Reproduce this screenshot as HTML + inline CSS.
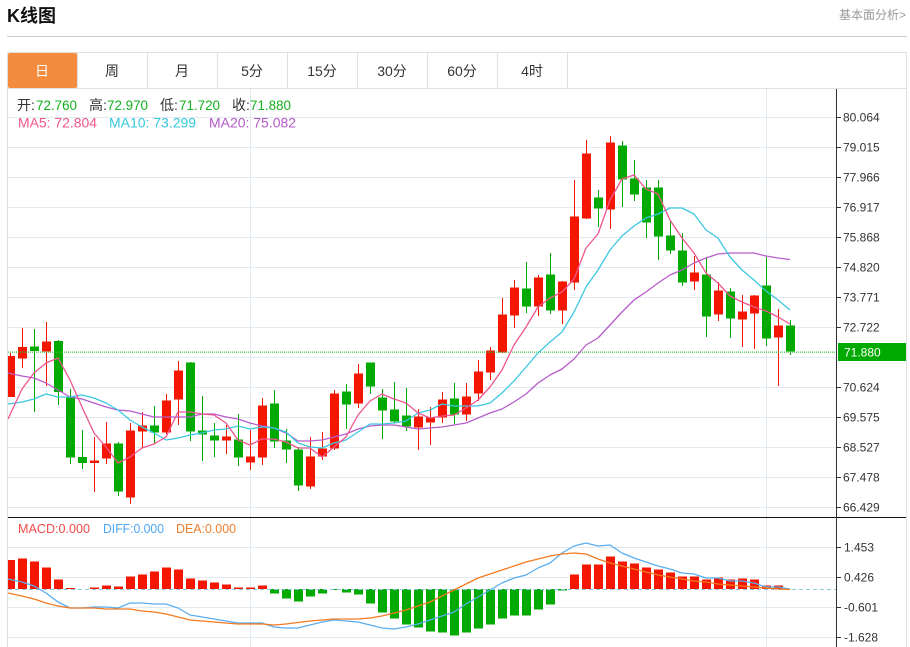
<!DOCTYPE html>
<html><head><meta charset="utf-8"><style>
html,body{margin:0;padding:0;background:#fff;width:910px;height:647px;overflow:hidden}
svg{display:block;font-family:"Liberation Sans","Noto Sans CJK SC",sans-serif}
polyline{stroke-width:1.3;stroke-linejoin:round}
</style></head><body>
<svg width="910" height="647" viewBox="0 0 910 647">
<defs><clipPath id="c"><rect x="8" y="89" width="828" height="558"/></clipPath></defs>
<text x="7" y="22" font-size="18" font-weight="bold" fill="#111">K线图</text>
<text x="906" y="19" font-size="12" fill="#999" text-anchor="end">基本面分析&gt;</text>
<path d="M7 36.5H907" stroke="#ccc" fill="none"/>
<rect x="8" y="53" width="69" height="35" rx="2" fill="#f58b3f"/>
<path d="M7 52.5H906.5V647M7.5 52V647M7 88.5H906.5M77.5 53V88M147.5 53V88M217.5 53V88M287.5 53V88M357.5 53V88M427.5 53V88M497.5 53V88M567.5 53V88" stroke="#e0e0e0" fill="none"/>
<g font-size="14" fill="#333" text-anchor="middle">
<text x="42" y="76" fill="#fff">日</text><text x="112" y="76">周</text><text x="182" y="76">月</text><text x="252" y="76">5分</text><text x="322" y="76">15分</text><text x="392" y="76">30分</text><text x="462" y="76">60分</text><text x="532" y="76">4时</text>
</g>
<path d="M8 117.5H836M8 147.5H836M8 177.5H836M8 207.5H836M8 237.5H836M8 267.5H836M8 297.5H836M8 327.5H836M8 357.5H836M8 387.5H836M8 417.5H836M8 447.5H836M8 477.5H836M8 507.5H836M8 547.5H836M8 577.5H836M8 607.5H836M8 637.5H836M250.5 89V647M766.5 89V647" stroke="#e2e9f0" fill="none"/>
<g clip-path="url(#c)">
<path fill="none" stroke="#f51600" d="M10.5 353V397M22.5 328V368M46.5 322V386M94.5 437V492M106.5 422V464M130.5 423V504M142.5 412V448M166.5 394V434M178.5 361V425M226.5 425V454M250.5 430V470M262.5 398V465M310.5 437V489M322.5 432V460M334.5 390V450M358.5 364V408M418.5 409V450M430.5 407V445M442.5 392V423M466.5 383V421M478.5 360V401M490.5 347V380M502.5 298V353M514.5 280V328M538.5 275V316M562.5 281V324M574.5 180V290M586.5 140V219M610.5 136V229M694.5 256V290M718.5 282V321M742.5 295V347M754.5 295V349M778.5 309V386"/>
<path fill="none" stroke="#00aa00" d="M34.5 329V412M58.5 340V405M70.5 389V464M82.5 430V469M118.5 442V496M154.5 406V444M190.5 362V441M202.5 396V461M214.5 423V457M238.5 414V466M274.5 390V448M286.5 429V463M298.5 447V491M346.5 384V429M370.5 363V394M382.5 389V439M394.5 382V423M406.5 388V431M454.5 383V424M526.5 262V313M550.5 253V314M598.5 190V227M622.5 141V207M634.5 160V201M646.5 180V238M658.5 180V260M670.5 220V254M682.5 233V286M706.5 258V337M730.5 288V338M766.5 257V346M790.5 320V355"/>
<path transform="translate(0,-.5)" fill="#f51600" d="M6 356.5h9v41h-9zM18 347.5h9v11.5h-9zM42 342h9v10h-9zM90 461h9v2.5h-9zM102 444h9v15h-9zM126 431h9v67h-9zM138 426h9v6h-9zM162 401h9v32h-9zM174 371h9v29h-9zM222 437h9v4h-9zM246 457h9v6h-9zM258 406h9v52h-9zM306 457h9v30h-9zM318 449h9v8h-9zM330 394h9v55h-9zM354 374h9v30h-9zM414 417h9v11h-9zM426 418h9v5h-9zM438 400h9v18h-9zM462 397h9v18h-9zM474 372h9v22h-9zM486 351h9v22h-9zM498 315h9v38h-9zM510 288h9v28h-9zM534 278h9v29h-9zM558 282h9v29h-9zM570 217h9v66h-9zM582 154h9v65h-9zM606 143h9v67h-9zM690 273h9v9h-9zM714 291h9v24h-9zM738 312h9v8h-9zM750 296h9v18h-9zM774 326h9v12h-9z"/>
<path transform="translate(0,-.5)" fill="#00aa00" d="M30 347h9v4.500h-9zM54 341.500h9v51h-9zM66 397h9v61h-9zM78 457.500h9v6h-9zM114 444h9v48h-9zM150 426h9v7h-9zM186 363h9v69h-9zM198 431h9v4h-9zM210 436h9v5h-9zM234 440h9v18h-9zM270 404h9v38h-9zM282 441h9v9h-9zM294 450h9v36h-9zM342 392h9v13h-9zM366 363h9v24h-9zM378 398h9v13h-9zM390 410h9v12h-9zM402 416h9v11h-9zM450 399h9v16h-9zM522 289h9v18h-9zM546 275h9v36h-9zM594 198h9v11h-9zM618 146h9v34h-9zM630 179h9v16h-9zM642 188h9v35h-9zM654 188h9v49h-9zM666 236h9v15h-9zM678 251h9v32h-9zM702 275h9v42h-9zM726 292h9v27h-9zM762 286h9v53h-9zM786 326h9v26h-9z"/>
<path d="M8 352.200H836" stroke="#3cb83c" stroke-width="1.600" stroke-dasharray="1 1" opacity=".75" fill="none"/>
<polyline fill="none" stroke="#b85ccc" points="8,373 22,376 34,378 46,383 58,390 70,397 82,399 94,403 106,407 118,410 130,411 142,414 154,417 166,417 178,417 190,417 202,414 214,414 226,417 238,419 250,423 262,426 274,428 286,433 298,441 310,441 322,440 334,437 346,434 358,429 370,426 382,425 394,425 406,427 418,429 430,428 442,427 454,425 466,423 478,418 490,413 502,409 514,402 526,394 538,383 550,375 562,369 574,359 586,345 598,338 610,325 622,312 634,300 646,292 658,283 670,275 682,270 694,263 706,258 718,254 730,253 742,253 754,253 766,256 778,258 790,259.500"/>
<polyline fill="none" stroke="#3cc8e0" points="8,404 22,402 34,399 46,394 58,397 70,397 82,395 94,398 106,403 118,410 130,420 142,427 154,433 166,440 178,438 190,435 202,433 214,430 226,429 238,426 250,429 262,427 274,428 286,432 298,443 310,447 322,448 334,443 346,440 358,432 370,424 382,424 394,423 406,421 418,413 430,410 442,404 454,406 466,406 478,406 490,403 502,393 514,381 526,367 538,353 550,342 562,332 574,312 586,287 598,270 610,250 622,236 634,226 646,218 658,214 670,208 682,208 694,214 706,230 718,238 730,257 742,270 754,280 766,291 778,300 790,310"/>
<polyline fill="none" stroke="#f0558f" points="8,419 22,389 34,373 46,363 58,358 70,380 82,407 94,433 106,447 118,463 130,457 142,448 154,444 166,437 178,412 190,412 202,414 214,415 226,423 238,440 250,445 262,439 274,439 286,442 298,448 310,448 322,457 334,447 346,437 358,415 370,401 382,394 394,399 406,403 418,413 430,418 442,416 454,415 466,408 478,400 490,387 502,370 514,345 526,327 538,307 550,298 562,292 574,279 586,248 598,234 610,200 622,179 634,175 646,189 658,194 670,220 682,238 694,253 706,273 718,283 730,296 742,302 754,307 766,311 778,317 790,324"/>
<path transform="translate(0,-.5)" fill="#f51600" d="M6 560.500h9v29h-9zM18 559h9v30.500h-9zM30 562h9v27.500h-9zM42 568h9v21.500h-9zM54 580h9v9.500h-9zM66 588.500h9v1h-9zM90 588h9v1.500h-9zM102 586h9v3.500h-9zM114 587h9v2.500h-9zM126 577h9v12.500h-9zM138 575h9v14.500h-9zM150 572h9v17.500h-9zM162 568h9v21.500h-9zM174 570h9v19.500h-9zM186 579h9v10.500h-9zM198 581h9v8.500h-9zM210 583h9v6.500h-9zM222 585h9v4.500h-9zM234 588h9v1.500h-9zM246 588h9v1.500h-9zM258 586h9v3.500h-9zM570 575h9v14.500h-9zM582 565h9v24.500h-9zM594 565h9v24.500h-9zM606 557h9v32.500h-9zM618 562h9v27.500h-9zM630 564h9v25.500h-9zM642 568h9v21.500h-9zM654 570h9v19.500h-9zM666 573h9v16.500h-9zM678 577h9v12.500h-9zM690 577h9v12.500h-9zM702 580h9v9.500h-9zM714 578h9v11.500h-9zM726 580h9v9.500h-9zM738 579h9v10.500h-9zM750 580h9v9.500h-9zM762 586h9v3.500h-9zM774 586h9v3.500h-9z"/>
<path transform="translate(0,-.5)" fill="#00aa00" d="M270 589.500h9v4.500h-9zM282 589.500h9v9.500h-9zM294 589.500h9v12.500h-9zM306 589.500h9v7.500h-9zM318 589.500h9v4.500h-9zM330 589.500h9v1h-9zM342 589.500h9v3.500h-9zM354 589.500h9v5.500h-9zM366 589.500h9v14.500h-9zM378 589.500h9v23.500h-9zM390 589.500h9v29.500h-9zM402 589.500h9v35.500h-9zM414 589.500h9v38.500h-9zM426 589.500h9v42.500h-9zM438 589.500h9v43.500h-9zM450 589.500h9v46.500h-9zM462 589.500h9v43.500h-9zM474 589.500h9v39.500h-9zM486 589.500h9v35.500h-9zM498 589.500h9v29.500h-9zM510 589.500h9v26.500h-9zM522 589.500h9v26.500h-9zM534 589.500h9v20.500h-9zM546 589.500h9v15.500h-9zM558 589.500h9v1.500h-9z"/>
<path d="M8 589.500H836" stroke="#8cc8e0" stroke-dasharray="4 3" fill="none"/>
<polyline fill="none" stroke="#5aaef0" points="8,579 22,582 34,586 46,593 58,602 70,608 82,608 94,607 106,607 118,608 130,603 142,603 154,604 166,604 178,608 190,615 202,617 214,619 226,621 238,623 250,623 262,623 274,627 286,628 298,628 310,625 322,622 334,620 346,621 358,622 370,625 382,628 394,629 406,627 418,624 430,620 442,616 454,612 466,604 478,597 490,590 502,583 514,578 526,575 538,568 550,563 562,553 574,546 586,543 598,546 610,545 622,553 634,558 646,562 658,566 670,569 682,573 694,574 706,578 718,578 730,581 742,581 754,583 766,587 778,587 790,589"/>
<polyline fill="none" stroke="#f57a20" points="8,593 22,596 34,599 46,603 58,606 70,608 82,608 94,608 106,609 118,609 130,609 142,611 154,612 166,614 178,617 190,620 202,621 214,622 226,623 238,624 250,624 262,624 274,625 286,624 298,622.500 310,621 322,620 334,619 346,619 358,619 370,618 382,616 394,613 406,610 418,606 430,602 442,596 454,590 466,584 478,578 490,574 502,570 514,566 526,562 538,559 550,556 562,554 574,553 586,554 598,559 610,563 622,566 634,569 646,572 658,575 670,577 682,579 694,581 706,582 718,584 730,585 742,586 754,587 766,588 778,589 790,589.500"/>
</g>
<path d="M8 517.500H906" stroke="#111" fill="none"/>
<path d="M836.500 89V647M836 117.500h5M836 147.500h5M836 177.500h5M836 207.500h5M836 237.500h5M836 267.500h5M836 297.500h5M836 327.500h5M836 387.500h5M836 417.500h5M836 447.500h5M836 477.500h5M836 507.500h5M836 547.500h5M836 577.500h5M836 607.500h5M836 637.500h5" stroke="#333" fill="none"/>
<g font-size="12" fill="#333">
<text x="843" y="121.500">80.064</text><text x="843" y="151.500">79.015</text><text x="843" y="181.500">77.966</text><text x="843" y="211.500">76.917</text><text x="843" y="241.500">75.868</text><text x="843" y="271.500">74.820</text><text x="843" y="301.500">73.771</text><text x="843" y="331.500">72.722</text><text x="843" y="391.500">70.624</text><text x="843" y="421.500">69.575</text><text x="843" y="451.500">68.527</text><text x="843" y="481.500">67.478</text><text x="843" y="511.500">66.429</text>
<text x="844" y="551.500">1.453</text><text x="844" y="581.500">0.426</text><text x="844" y="611.500">-0.601</text><text x="844" y="641.500">-1.628</text>
</g>
<rect x="838" y="343" width="68" height="18" fill="#00aa00"/>
<text x="844" y="356.500" font-size="12" fill="#fff">71.880</text>
<g font-size="14">
<g fill="#333"><text x="17" y="110">开:</text><text x="89" y="110">高:</text><text x="160" y="110">低:</text><text x="232" y="110">收:</text></g>
<g fill="#14b01e"><text x="36" y="110" textLength="41" lengthAdjust="spacingAndGlyphs">72.760</text><text x="107" y="110" textLength="41" lengthAdjust="spacingAndGlyphs">72.970</text><text x="179" y="110" textLength="41" lengthAdjust="spacingAndGlyphs">71.720</text><text x="250" y="110" textLength="41" lengthAdjust="spacingAndGlyphs">71.880</text></g>
<text x="18" y="127.500" fill="#f0558f" textLength="79" lengthAdjust="spacingAndGlyphs" xml:space="preserve">MA5: 72.804</text>
<text x="109" y="127.500" fill="#34c8dd" textLength="87" lengthAdjust="spacingAndGlyphs" xml:space="preserve">MA10: 73.299</text>
<text x="209" y="127.500" fill="#b45ac8" textLength="87" lengthAdjust="spacingAndGlyphs" xml:space="preserve">MA20: 75.082</text>
</g>
<g font-size="13">
<text x="18" y="533" fill="#f04a4a" textLength="72" lengthAdjust="spacingAndGlyphs">MACD:0.000</text>
<text x="103" y="533" fill="#4da6f5" textLength="61" lengthAdjust="spacingAndGlyphs">DIFF:0.000</text>
<text x="176" y="533" fill="#f07f30" textLength="60" lengthAdjust="spacingAndGlyphs">DEA:0.000</text>
</g>
</svg>
</body></html>
